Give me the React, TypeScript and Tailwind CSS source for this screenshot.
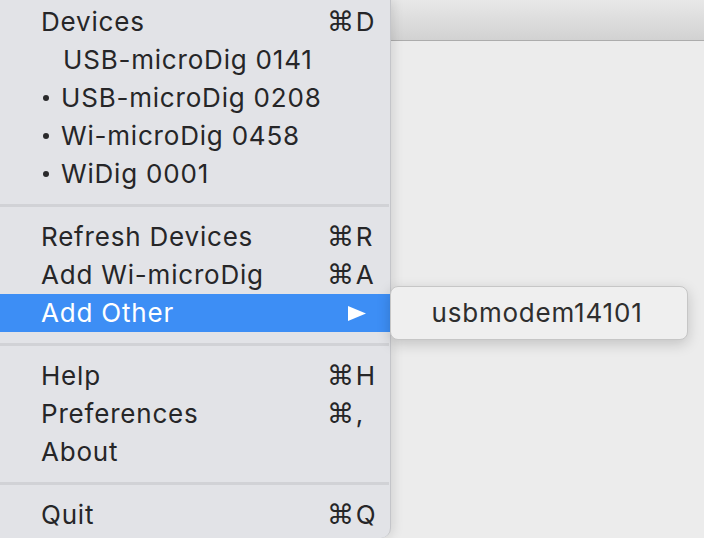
import React from 'react';

type Item = { label: string; key?: string; bullet?: boolean; indent?: boolean; active?: boolean; sub?: boolean };

const groups: Item[][] = [
    [
        { label: "Devices", key: "D" },
        { label: "USB-microDig 0141", indent: true },
        { label: "USB-microDig 0208", bullet: true },
        { label: "Wi-microDig 0458", bullet: true },
        { label: "WiDig 0001", bullet: true },
    ],
    [
        { label: "Refresh Devices", key: "R" },
        { label: "Add Wi-microDig", key: "A" },
        { label: "Add Other", active: true, sub: true },
    ],
    [
        { label: "Help", key: "H" },
        { label: "Preferences", key: "," },
        { label: "About" },
    ],
    [{ label: "Quit", key: "Q" }],
];

function Row({ item }: { item: Item }) {
    return (
        <div
            className={`flex items-center h-[38px] pr-[17px] pb-[2px] ${item.active ? 'bg-[#3d8ef5] text-white' : 'text-[#262628]'}`}
        >
            {item.bullet ? (
                <span className="flex items-center w-[61px] pl-[43px] pt-[2px]">
                    <span className="w-[6px] h-[6px] rounded-full bg-[#2a2a2c]" />
                </span>
            ) : (
                <span className={item.indent ? 'w-[63px]' : 'w-[41px]'} />
            )}
            <span className="flex-1">{item.label}</span>
            {item.key && (
                <span className="w-[46px] flex items-center">
                    <span className="font-['DejaVu_Sans'] text-[27px] leading-none mr-[1px]">⌘</span>
                    <span>{item.key}</span>
                </span>
            )}
            {item.sub && (
                <span className="w-[46px] flex items-center pl-[21px] pt-[2px]">
                    <svg width="18" height="15" viewBox="0 0 18 15">
                        <path d="M0 0 L18 7.5 L0 15 Z" fill="#ffffff" />
                    </svg>
                </span>
            )}
        </div>
    );
}

export default function App() {
    return (
        <div className="relative flex w-[704px] h-[538px] overflow-hidden bg-[#ececec] font-['Inter','DejaVu_Sans',sans-serif] text-[26px] tracking-[0.8px]">
            {/* Menu */}
            <div className="relative z-10 w-[391px] h-full pt-[3px] bg-[#e2e3e7] border-r border-[#c4c5c9] rounded-br-[10px] shadow-[2px_0_12px_rgba(0,0,0,0.12)]">
                {groups.map((g, i) => (
                    <div key={i}>
                        {i > 0 && <div className="h-[3px] my-[11px] mr-[1px] bg-[#d1d2d6]" />}
                        {g.map(item => <Row key={item.label} item={item} />)}
                    </div>
                ))}
            </div>

            {/* Window behind */}
            <div className="flex-1 flex flex-col">
                <div className="h-[41px] bg-gradient-to-b from-[#e8e8e8] to-[#d2d2d2] border-b border-[#acacac]" />
                <div className="flex-1 bg-[#ececec]" />
            </div>

            {/* Submenu */}
            <div className="absolute z-20 left-[390px] top-[286px] w-[298px] h-[54px] flex items-center justify-center pr-[4px] pb-[2px] rounded-[8px] bg-[#efefef] border border-[#c6c6c6] shadow-[0_4px_14px_rgba(0,0,0,0.18)] text-[#2e2e2e]">
                usbmodem14101
            </div>
        </div>
    );
}
